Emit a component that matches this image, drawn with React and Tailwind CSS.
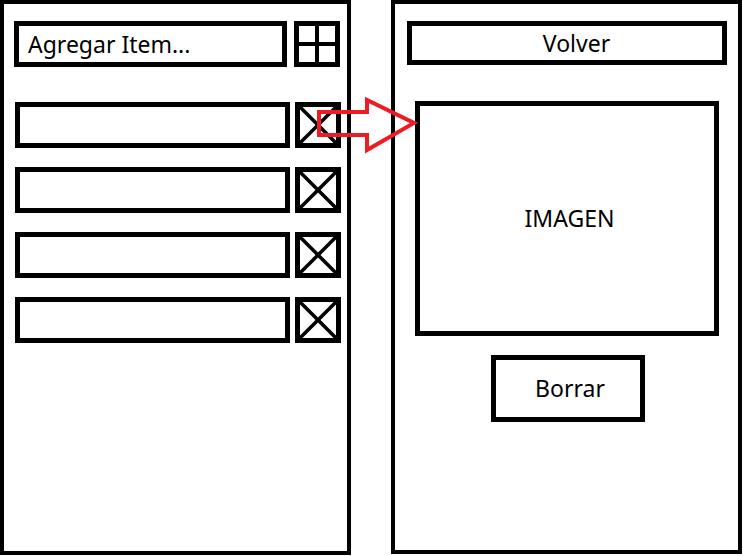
import React from "react";

const font = { fontFamily: '"Noto Sans", "Open Sans", sans-serif' };

function XBox() {
  return (
    <div className="w-[46px] h-[46px] border-[5px] border-black shrink-0">
      <svg width="36" height="36" viewBox="0 0 36 36" className="block">
        <line x1="0" y1="0" x2="36" y2="36" stroke="black" strokeWidth="3.5" />
        <line x1="36" y1="0" x2="0" y2="36" stroke="black" strokeWidth="3.5" />
      </svg>
    </div>
  );
}

function PlusBox() {
  return (
    <div className="w-[46px] h-[46px] bg-black p-[5px] grid grid-cols-2 grid-rows-2 gap-[4px] shrink-0">
      <div className="bg-white" />
      <div className="bg-white" />
      <div className="bg-white" />
      <div className="bg-white" />
    </div>
  );
}

function ListPanel() {
  const items = [1, 2, 3, 4];
  return (
    <div className="w-[351px] h-[555px] border-4 border-black pt-[17px] pl-[10px]">
      <div className="flex gap-[7px]">
        <div className="w-[273px] h-[46px] border-[5px] border-black flex items-center pl-[9px] text-[23px] text-black">
          Agregar Item...
        </div>
        <PlusBox />
      </div>
      <div className="flex flex-col gap-[19px] mt-[35px] pl-[1px]">
        {items.map((i) => (
          <div key={i} className="flex gap-[5px]">
            <div className="w-[275px] h-[46px] border-[5px] border-black" />
            <XBox />
          </div>
        ))}
      </div>
    </div>
  );
}

function DetailPanel() {
  return (
    <div className="w-[351px] h-[554px] border-4 border-black pt-[17px] flex flex-col items-center">
      <div className="w-[320px] h-[44px] border-[5px] border-black flex items-center justify-center pl-5 text-[23px] text-black">
        Volver
      </div>
      <div className="mt-[36px] w-[304px] h-[235px] border-[5px] border-black flex items-center justify-center pl-[6px] text-[23px] text-black">
        IMAGEN
      </div>
      <div className="mt-[19px] ml-[3px] w-[154px] h-[67px] border-[5px] border-black flex items-center justify-center pl-[4px] text-[23px] text-black">
        Borrar
      </div>
    </div>
  );
}

export default function App() {
  return (
    <div className="relative w-[743px] h-[556px] bg-white overflow-hidden" style={font}>
      <div className="flex gap-[40px]">
        <ListPanel />
        <DetailPanel />
      </div>
      <svg
        className="absolute left-0 top-0 pointer-events-none"
        width="743"
        height="556"
        viewBox="0 0 743 556"
      >
        <polygon
          points="319,112 367,112 367,100 414,123 367,150 367,135 319,135"
          fill="none"
          stroke="#ed1c24"
          strokeWidth="4"
          strokeLinejoin="miter"
        />
      </svg>
    </div>
  );
}
